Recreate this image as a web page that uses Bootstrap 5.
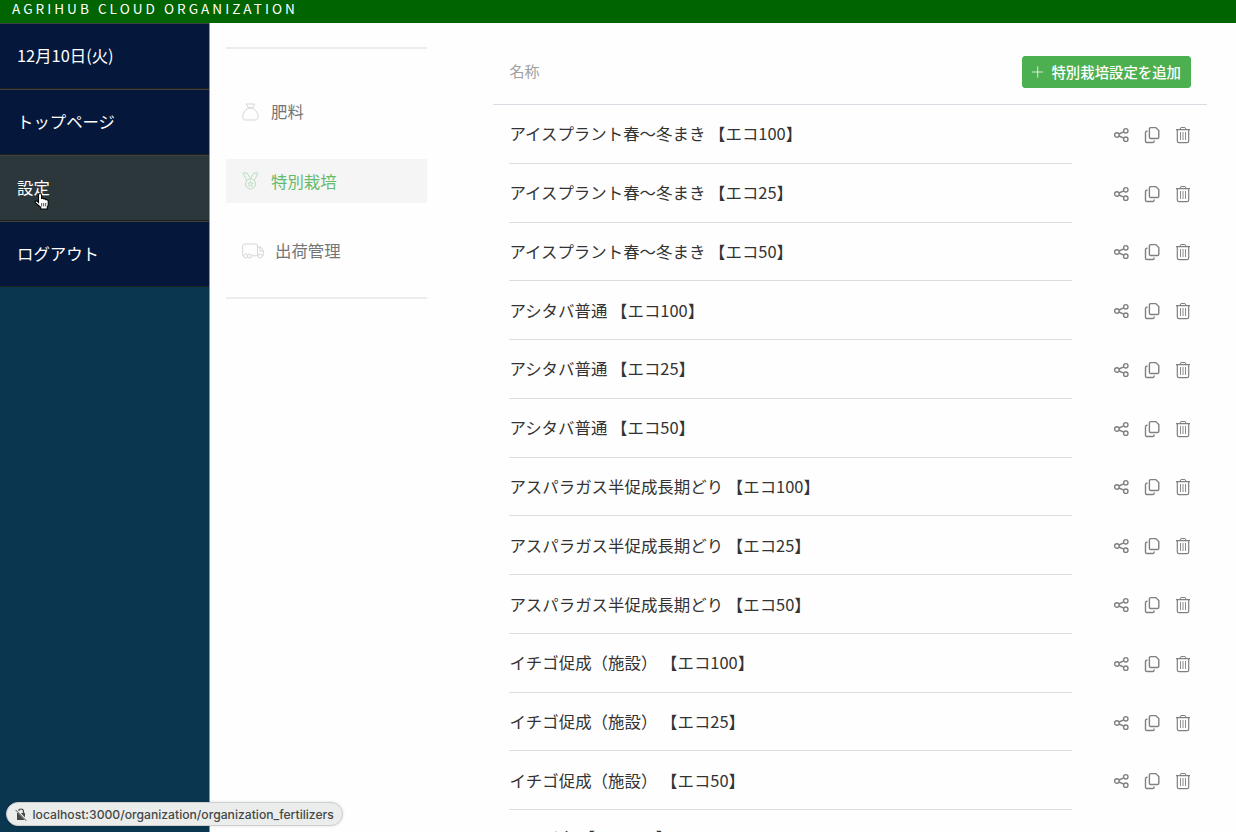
<!DOCTYPE html>
<html lang="ja">
<head>
<meta charset="utf-8">
<title>AGRIHUB CLOUD ORGANIZATION</title>
<link href="https://cdn.jsdelivr.net/npm/bootstrap@5.3.0/dist/css/bootstrap.min.css" rel="stylesheet">
<style>
body{font-family:"Noto Sans CJK JP",sans-serif;font-size:16.4px;line-height:24px;background:#fefefe;color:#333;height:832px;overflow:hidden}
.topbar{height:23px;background:#006400;color:#fff;font-size:13.6px;letter-spacing:3.02px;line-height:17px;padding-left:12px}
.shell{height:809px}
.side{width:210px;background:#0b3650;border-right:1px solid #8795a5}
.side a{height:66px;padding:0 0 2px 17px;color:#fff;background:#05183c;border-top:1px solid #3e423f;border-bottom:1px solid #1c211f;text-decoration:none}
.side a.current{background:#2b373a}
.sub{width:201px;margin:24px 66px 0 16px;height:252px;border-top:2px solid #ececec;border-bottom:2px solid #ececec;padding-top:40.5px}
.sub a{height:44px;margin-bottom:25.6px;padding-left:16px;color:#757575;text-decoration:none}
.sub a.current{background:#f5f5f5;color:#66bb6a}
.sub span{padding-bottom:1px}
.sub svg{fill:none;stroke:#d5d5d5;stroke-width:1}
.sub .current svg{stroke:#b9dfbb}
.listing{width:714px}
.list-head{height:82px;padding:16px 16px 0;border-bottom:1px solid #d8dde4;font-size:15px;color:#9e9e9e}
.list-head span{padding:0 0 2px .5px}
.add-btn{--bs-btn-padding-x:9px;--bs-btn-padding-y:0;--bs-btn-font-size:14.4px;--bs-btn-font-weight:500;--bs-btn-color:#fff;--bs-btn-bg:#4caf50;--bs-btn-border-color:#4caf50;--bs-btn-border-radius:3px;height:32px;width:169px;white-space:nowrap;line-height:30px}
.crop{height:58.77px;padding:0 16px}
.crop-name{width:563px;border-bottom:1px solid #ddd;white-space:pre;font-size:16.45px;padding:0 0 1px .4px}
.crop:last-child .crop-name{padding-bottom:4px}
.crop:last-child .tools{padding-bottom:1px}
.tools{gap:15px;padding-top:1px}
.tools svg{fill:none;stroke:#808080;stroke-width:1.4}
.status-url{left:6px;top:802px;height:24px;width:337px;background:#ebedec;border:1px solid #cdd0cf;border-radius:12px;box-shadow:0 0 3px #0002;font:500 12.17px Inter,sans-serif;color:#444847;padding-left:8px;white-space:nowrap}
.pointer{left:34px;top:192px}
</style>
</head>
<body>
<svg class="d-none">
<symbol id="share" viewBox="0 0 16 16"><circle cx="3.9" cy="8" r="2.3"/><circle cx="12.800" cy="3.800" r="2.200"/><circle cx="12.800" cy="12.200" r="2.200"/><path d="M6 7 10.700 4.800M6 9l4.800 2.200"/></symbol>
<symbol id="copy" viewBox="0 0 16 18"><path d="M6.700 1.600h5.100l3 3v6.600q0 1.300-1.300 1.300H6.700q-1.300 0-1.300-1.300V2.900q0-1.300 1.300-1.300z"/><path d="M3.500 5.300H2.800Q1.500 5.300 1.500 6.600v8.600q0 1.300 1.300 1.300h6q1.300 0 1.300-1.300v-.6"/></symbol>
<symbol id="trash" viewBox="0 0 16 18"><path d="M1 3.700h14M2.300 4v11q0 1.600 1.600 1.600h8.200q1.600 0 1.600-1.600V4M5 3.500q.3-2 1.600-2h2.800q1.300 0 1.600 2" stroke-width="1.200"/><path d="M5.500 6v8M8 6v8M10.500 6v8" stroke-width=".9"/></symbol>
</svg>
<header class="topbar">AGRIHUB CLOUD ORGANIZATION</header>
<div class="shell d-flex">
<nav class="side d-flex flex-column flex-shrink-0">
<a class="d-flex align-items-center" href="#">12月10日(火)</a>
<a class="d-flex align-items-center" href="#">トップページ</a>
<a class="d-flex align-items-center current" href="#">設定</a>
<a class="d-flex align-items-center" href="#">ログアウト</a>
</nav>
<nav class="sub flex-shrink-0">
<a class="d-flex align-items-center" href="#"><svg width="17" height="18" viewBox="0 0 17 18"><path d="M4.300 1h8.400l-2 3.700H6.300zM6 5.200h5M6.200 5.200C3 7 .8 10.600.8 13.300c0 2.500 1 3.700 3 3.700h9.400c2 0 3-1.200 3-3.700 0-2.700-2.200-6.300-5.400-8.100"/></svg><span style="margin-left:12px">肥料</span></a>
<a class="d-flex align-items-center current" href="#"><svg width="17" height="18" viewBox="0 0 17 18"><circle cx="8.500" cy="12" r="5"/><path d="m8.500 9.400.8 1.700 1.800.2-1.300 1.300.3 1.800-1.600-.9-1.600.9.3-1.800-1.300-1.300 1.800-.2zM4.700 8.500 1 1h4.100l3.400 5.600L11.900 1H16l-3.700 7.500"/></svg><span style="margin-left:12px">特別栽培</span></a>
<a class="d-flex align-items-center" href="#"><svg width="22" height="16" viewBox="0 0 22 16"><path d="M1.600 13Q.6 13 .6 11.500V3Q.6 1 2.600 1h10.900Q15.500 1 15.500 3v9.500M9.500 12.800h6M15.500 4h2.700q1 0 1.400 1l1.700 3v4.200q0 .8-.8.800M18 4v4h3.300"/><circle cx="3.500" cy="13" r="2"/><circle cx="7.600" cy="13" r="2"/><circle cx="18" cy="13" r="2"/></svg><span style="margin-left:11px">出荷管理</span></a>
</nav>
<main class="listing flex-shrink-0">
<div class="list-head d-flex align-items-center justify-content-between"><span>名称</span>
<button class="btn add-btn d-flex align-items-center"><svg width="12" height="12" viewBox="0 0 12 12" class="me-2" stroke="#fff" stroke-opacity=".8"><path d="M6 0v12M0 6h12"/></svg>特別栽培設定を追加</button></div>
<div id="crops"></div>
</main>
</div>
<div class="status-url position-absolute d-flex align-items-center"><svg width="12" height="13" viewBox="0 0 12 13" style="margin-right:5.500px"><path d="M2 5h8v7H2z" fill="#444847"/><path d="M3.500 5V3.500a2.500 2.500 0 0 1 5 0V5" fill="none" stroke="#444847" stroke-width="1.200"/><path d="m1 1.500 10.500 11" stroke="#ebedec" stroke-width="2"/><path d="m.6 2 10.600 10.700" stroke="#444847"/></svg>localhost:3000/organization/organization_fertilizers</div>
<svg class="pointer position-absolute" width="17" height="19" viewBox="0 0 17 19"><path d="M4.500 10.500V3.200q0-1.700 1.500-1.700t1.600 1.700V6.500q1.800-.8 2.400.5 1.600-.5 2.100.8 2.100-.4 2.100 1.600v3q0 1.400-.9 2.600V17H6.700v-1.700L1.500 10.800q-.8-1.200.2-1.800 1-.5 2.800 1.500z" fill="#fff" stroke="#000" stroke-width="1.100"/><path d="M7.700 11v3.500M9.700 11v3.500M11.700 11v3.500" stroke="#000" stroke-width=".7"/></svg>
<script src="https://cdn.jsdelivr.net/npm/bootstrap@5.3.0/dist/js/bootstrap.bundle.min.js"></script>
<script>
const names = ['アイスプラント春〜冬まき', 'アシタバ普通', 'アスパラガス半促成長期どり', 'イチゴ促成（施設）'];
const rows = names.flatMap(n => [100, 25, 50].map(e => `${n} 【エコ${e}】`));
rows.push('イチジク 【エコ100】');
document.getElementById('crops').innerHTML = rows.map(r => `
<div class="crop d-flex justify-content-between">
<div class="crop-name d-flex align-items-center">${r}</div>
<div class="tools d-flex align-items-center"><svg width="16" height="16"><use href="#share"/></svg><svg width="16" height="18"><use href="#copy"/></svg><svg width="16" height="18"><use href="#trash"/></svg></div>
</div>`).join('');
</script>
</body>
</html>
